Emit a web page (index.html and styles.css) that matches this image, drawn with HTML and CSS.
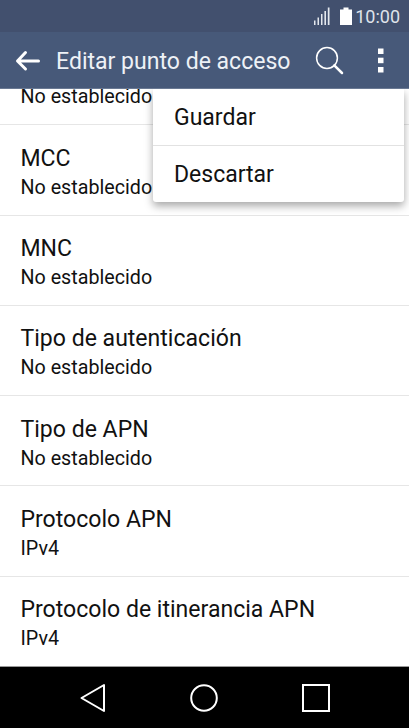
FILE: index.html
```html
<!DOCTYPE html>
<html lang="es">
<head>
    <meta charset="UTF-8">
    <meta name="viewport" content="width=device-width, initial-scale=1.0">
    <title>Editar punto de acceso</title>
    <link rel="stylesheet" href="styles.css">
</head>
<body>

<div class="status-bar">
    <svg class="signal" width="17" height="19" viewBox="0 0 17 19" fill="#e3e7ed">
        <rect x="0" y="13.5" width="1.5" height="4.5"/>
        <rect x="3.5" y="10.5" width="1.5" height="7.5"/>
        <rect x="7" y="7" width="1.5" height="11"/>
        <rect x="10.4" y="4" width="1.6" height="14"/>
        <rect x="13.8" y="0.5" width="1.7" height="17.5"/>
    </svg>
    <svg class="battery" width="12" height="19" viewBox="0 0 12 19" fill="#fff">
        <path d="M3.5 0.5h5v2H12V18H0V2.5h3.5z"/>
    </svg>
    <span class="clock">10:00</span>
</div>

<header class="app-bar">
    <svg class="back" width="26" height="22" viewBox="0 0 26 22" fill="none" stroke="#fff" stroke-width="3" stroke-linecap="round" stroke-linejoin="round">
        <path d="M10.5 2.5L2.5 11l8 8M3 11h20.5"/>
    </svg>
    <h1>Editar punto de acceso</h1>
    <svg class="search" width="30" height="30" viewBox="0 0 30 30" fill="none" stroke="#fff">
        <circle cx="12" cy="12" r="10.4" stroke-width="1.5"/>
        <path d="M19.3 19.3L27 27" stroke-width="2.5" stroke-linecap="round"/>
    </svg>
    <svg class="more" width="6" height="26" viewBox="0 0 6 26" fill="#fff">
        <rect x="0" y="0.5" width="5.5" height="5.5"/>
        <rect x="0" y="9.7" width="5.5" height="5.5"/>
        <rect x="0" y="19" width="5.5" height="5.5"/>
    </svg>
</header>

<main class="content">
    <ul class="settings">
        <li><div class="value">No establecido</div></li>
        <li><div class="name">MCC</div><div class="value">No establecido</div></li>
        <li><div class="name">MNC</div><div class="value">No establecido</div></li>
        <li><div class="name">Tipo de autenticación</div><div class="value">No establecido</div></li>
        <li><div class="name">Tipo de APN</div><div class="value">No establecido</div></li>
        <li><div class="name">Protocolo APN</div><div class="value">IPv4</div></li>
        <li><div class="name">Protocolo de itinerancia APN</div><div class="value">IPv4</div></li>
    </ul>

    <div class="menu">
        <div class="menu-item">Guardar</div>
        <div class="menu-item">Descartar</div>
    </div>
</main>

<nav class="nav-bar">
    <svg width="28" height="30" viewBox="0 0 28 30" fill="none" stroke="#fff" stroke-width="2">
        <path d="M3.5 15L26 2v26z" stroke-linejoin="round"/>
    </svg>
    <svg width="28" height="30" viewBox="0 0 28 30" fill="none" stroke="#fff" stroke-width="2">
        <circle cx="14" cy="15" r="12.8"/>
    </svg>
    <svg width="28" height="30" viewBox="0 0 28 30" fill="none" stroke="#fff" stroke-width="2">
        <rect x="1" y="2" width="26" height="26"/>
    </svg>
</nav>

</body>
</html>
```

FILE: styles.css
```css
* {
    box-sizing: border-box;
}
body {
    margin: 0;
    height: 728px;
    display: flex;
    flex-direction: column;
    overflow: hidden;
    font-family: Roboto, "Liberation Sans", sans-serif;
    background: #fff;
    color: #111;
}
.status-bar {
    height: 32px;
    flex: none;
    display: flex;
    justify-content: flex-end;
    padding: 7px 9px 0 0;
    background: #42506e;
    color: #dfe3ea;
}
.battery {
    margin: 0 3px 0 9px;
}
.clock {
    font-size: 18px;
    line-height: 20px;
}
.app-bar {
    height: 57px;
    flex: none;
    display: flex;
    align-items: center;
    padding: 1px 25px 0 15px;
    background: #475979;
    border-bottom: 1px solid #6a7993;
    color: #eef1f6;
}
.app-bar h1 {
    flex: 1;
    margin: 2px 0 0 15px;
    font-size: 23.05px;
    font-weight: 400;
    line-height: 28px;
    white-space: nowrap;
}
.search {
    margin-right: 33.5px;
}
.content {
    position: relative;
    flex: 1;
    min-height: 0;
}
.settings {
    height: 100%;
    margin: 0;
    padding: 0;
    list-style: none;
    display: flex;
    flex-direction: column;
    justify-content: flex-end;
    overflow: hidden;
}
.settings li {
    flex: none;
    height: 90.3px;
    padding: 19.6px 20.5px 0;
    border-bottom: 1px solid #e6e6e6;
}
/* row scrolled partly under the app bar */
.settings li:first-child {
    flex: 1;
    min-height: 0;
    padding-top: 0;
    display: flex;
    align-items: flex-end;
    padding-bottom: 15px;
}
.settings li:last-child {
    border-bottom-color: #999;
}
.name {
    font-size: 23.05px;
    line-height: 28px;
}
.value {
    margin-top: 3px;
    font-size: 19.7px;
    line-height: 24px;
}
.menu {
    position: absolute;
    top: 0;
    right: 5px;
    width: 251px;
    background: #fff;
    border-radius: 0 0 3px 3px;
    box-shadow: 0 4px 9px rgba(0, 0, 0, 0.35);
    clip-path: inset(0 -20px -20px -20px);
}
.menu-item {
    height: 56px;
    padding-left: 21px;
    font-size: 23px;
    line-height: 58px;
}
.menu-item:first-child {
    height: 57px;
    border-bottom: 1px solid #e2e2e2;
}
.nav-bar {
    height: 61px;
    flex: none;
    display: flex;
    justify-content: space-between;
    align-items: center;
    padding: 0 79px 0 78px;
    background: #000;
}
```
